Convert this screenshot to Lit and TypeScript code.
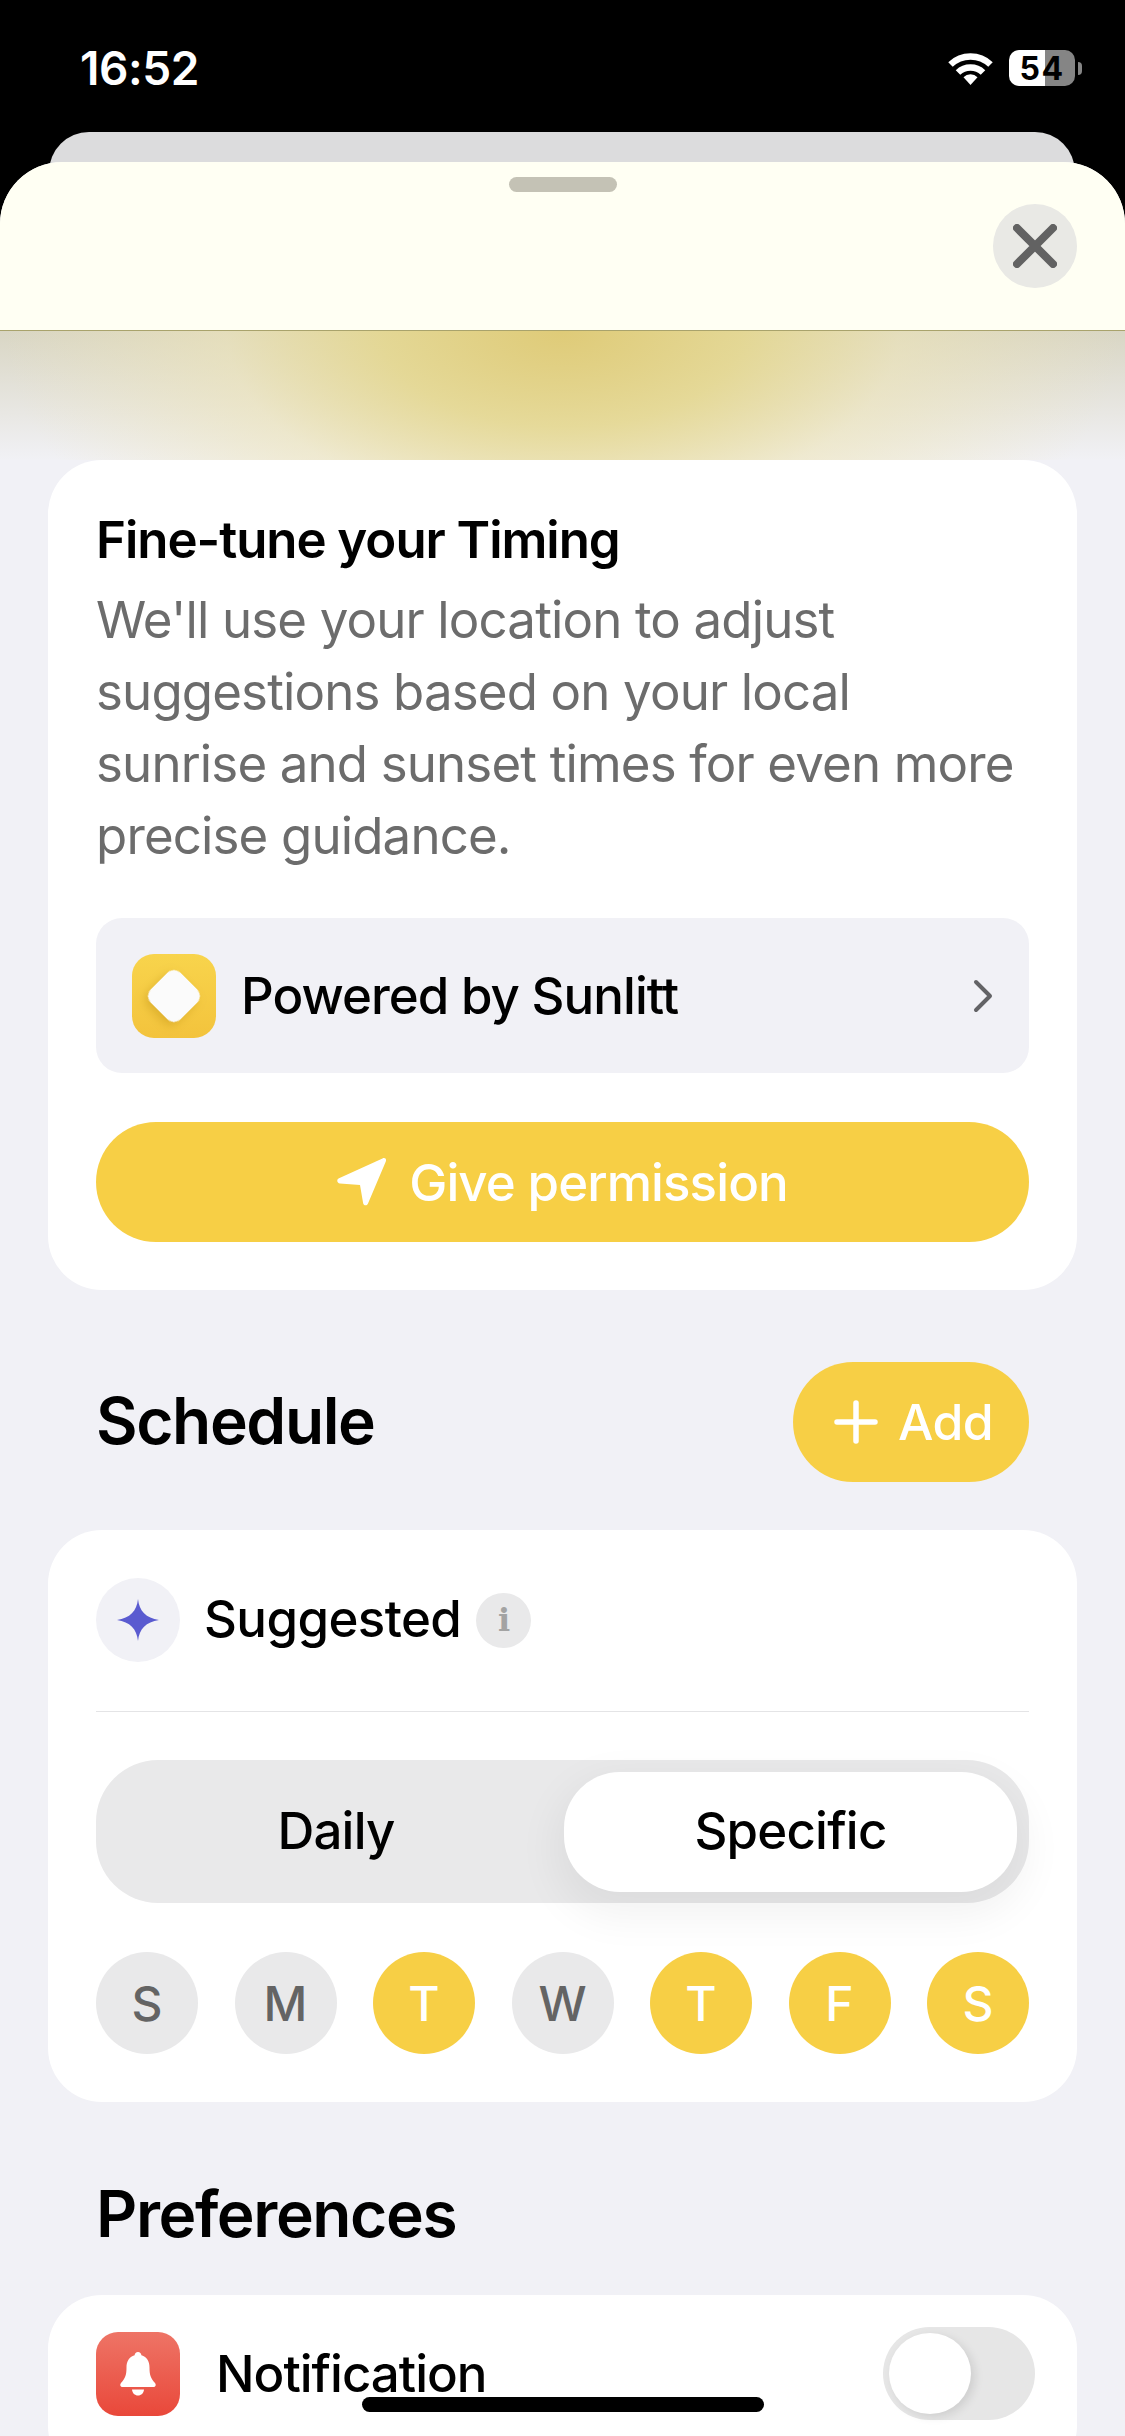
import { LitElement, html, css } from 'lit';
import { customElement } from 'lit/decorators.js';

const DAYS = [
  { label: 'S', on: false },
  { label: 'M', on: false },
  { label: 'T', on: true },
  { label: 'W', on: false },
  { label: 'T', on: true },
  { label: 'F', on: true },
  { label: 'S', on: true },
];

@customElement('app-root')
export class AppRoot extends LitElement {
  static styles = css`
    :host {
      display: block;
      position: relative;
      width: 1125px;
      height: 2436px;
      overflow: hidden;
      background: #000;
      font-family: Inter, 'Liberation Sans', sans-serif;
      color: #000;
    }

    /* status bar */
    .status {
      display: flex;
      align-items: center;
      justify-content: space-between;
      height: 132px;
      padding: 4px 43px 0 80px;
      box-sizing: border-box;
      color: #fff;
    }
    .time {
      font-size: 46px;
      font-weight: 600;
      letter-spacing: -0.4px;
    }
    .status-right {
      display: flex;
      align-items: center;
      gap: 16px;
    }
    .battery {
      display: flex;
      align-items: center;
      justify-content: center;
      width: 66px;
      height: 36px;
      border-radius: 10px;
      background: linear-gradient(90deg, #fff 0 54.5%, #858585 54.5% 100%);
      color: #000;
      font-size: 32px;
      font-weight: 700;
      letter-spacing: 1.5px;
    }
    .nub {
      width: 4px;
      height: 13px;
      margin-left: -13px;
      border-radius: 0 4px 4px 0;
      background: #858585;
    }

    /* sheets */
    .back-sheet {
      height: 60px;
      margin: 0 50px -30px 49px;
      border-radius: 40px 40px 0 0;
      background: #dcdcdd;
    }
    .sheet {
      position: relative;
      border-radius: 62px 62px 0 0;
      overflow: hidden;
      background: #f1f1f6;
    }
    .sheet-head {
      display: flex;
      flex-direction: column;
      box-sizing: border-box;
      height: 169px;
      padding-top: 15px;
      background: #fffff3;
      border-bottom: 1px solid #a9a36c;
    }
    .grabber {
      align-self: center;
      width: 108px;
      height: 15px;
      border-radius: 8px;
      background: #c4c2b5;
    }
    .close {
      display: flex;
      align-items: center;
      justify-content: center;
      align-self: flex-end;
      width: 84px;
      height: 84px;
      margin: 12px 48px 0 0;
      border-radius: 50%;
      background: #e9e9e5;
    }
    .glow {
      height: 129px;
      background:
        radial-gradient(ellipse 560px 300px at 50% 0, #dfcb78 0%, rgba(229, 215, 140, 0.85) 32%, rgba(238, 228, 180, 0.55) 60%, rgba(240, 232, 200, 0) 100%),
        linear-gradient(180deg, #d9d6c4 0%, #f1f1f5 100%);
    }
    .content {
      display: flex;
      flex-direction: column;
      padding: 0 48px;
    }
    .card {
      border-radius: 54px;
      background: #fff;
      padding: 48px;
    }

    /* permission card */
    .intro {
      padding-top: 50px;
    }
    .intro h2 {
      margin: 0 0 14px;
      font-size: 51px;
      line-height: 60px;
      font-weight: 600;
      letter-spacing: -1.05px;
    }
    .intro p {
      margin: 0;
      font-size: 51px;
      line-height: 72px;
      letter-spacing: -0.85px;
      color: #6c6c6c;
    }
    .powered {
      display: flex;
      align-items: center;
      gap: 25px;
      height: 155px;
      margin-top: 46px;
      padding: 0 36px;
      box-sizing: border-box;
      border-radius: 26px;
      background: #f1f1f6;
      font-size: 51px;
      font-weight: 450;
      letter-spacing: -0.95px;
    }
    .powered span {
      flex: 1;
    }
    .primary {
      display: flex;
      align-items: center;
      justify-content: center;
      gap: 22px;
      height: 120px;
      margin-top: 49px;
      border-radius: 60px;
      background: #f7cf45;
      color: #fff;
      font-size: 51px;
      font-weight: 500;
      letter-spacing: -0.9px;
    }

    /* section titles */
    .section-head {
      display: flex;
      align-items: center;
      justify-content: space-between;
      margin: 72px 0 48px;
      padding: 0 48px;
    }
    .section-head .section-title {
      padding-bottom: 3px;
    }
    .section-title {
      margin: 0;
      font-size: 64px;
      line-height: 78px;
      font-weight: 600;
      letter-spacing: -1.4px;
    }
    .add {
      display: flex;
      align-items: center;
      gap: 20px;
      height: 120px;
      padding: 0 36px 0 41px;
      border-radius: 60px;
      background: #f7cf45;
      color: #fff;
      font-size: 50px;
      font-weight: 500;
      letter-spacing: -0.6px;
    }
    .prefs-title {
      margin: 73px 0 42px;
      padding: 0 48px;
    }

    /* schedule card */
    .suggested {
      display: flex;
      align-items: center;
      gap: 24px;
      padding-bottom: 49px;
      border-bottom: 1px solid #e4e4e6;
      font-size: 51px;
      font-weight: 500;
      letter-spacing: -0.6px;
    }
    .suggested-label {
      padding-bottom: 3px;
    }
    .spark {
      display: flex;
      align-items: center;
      justify-content: center;
      width: 84px;
      height: 84px;
      border-radius: 50%;
      background: #f1f1f6;
    }
    .info {
      display: flex;
      align-items: center;
      justify-content: center;
      width: 55px;
      height: 55px;
      margin-left: -9px;
      border-radius: 50%;
      background: #e9e9ea;
      color: #a3a3a3;
      font-family: 'DejaVu Serif', serif;
      font-size: 32px;
      font-weight: 700;
    }
    .segment {
      display: grid;
      grid-template-columns: 456px 1fr;
      align-items: center;
      height: 143px;
      margin-top: 48px;
      padding: 12px;
      box-sizing: border-box;
      border-radius: 62px;
      background: #e9e9ea;
      font-size: 51px;
      font-weight: 500;
      letter-spacing: -0.8px;
      text-align: center;
    }
    .daily {
      padding-bottom: 3px;
    }
    .thumb {
      display: flex;
      align-items: center;
      justify-content: center;
      box-sizing: border-box;
      height: 120px;
      padding-bottom: 3px;
      border-radius: 56px;
      background: #fff;
      box-shadow: 0 16px 40px 10px rgba(0, 0, 0, 0.05);
    }
    .days {
      display: flex;
      justify-content: space-between;
      margin-top: 49px;
    }
    .day {
      display: flex;
      align-items: center;
      justify-content: center;
      width: 102px;
      height: 102px;
      border-radius: 50%;
      background: #e9e9ea;
      color: #646464;
      font-size: 48px;
      font-weight: 550;
    }
    .day.on {
      background: #f7cf45;
      color: #fff;
    }

    /* preferences card */
    .pref-row {
      display: flex;
      align-items: center;
      gap: 36px;
      padding-top: 32px;
      padding-bottom: 60px;
      font-size: 51px;
      font-weight: 450;
      letter-spacing: -1px;
    }
    .pref-row span {
      flex: 1;
    }
    .bell {
      display: flex;
      align-items: center;
      justify-content: center;
      width: 84px;
      height: 84px;
      border-radius: 22px;
      background: linear-gradient(180deg, #ee7466 0%, #e9483a 100%);
    }
    .toggle {
      display: flex;
      align-items: center;
      box-sizing: border-box;
      width: 152px;
      height: 93px;
      margin-right: -6px;
      padding-left: 6px;
      border-radius: 47px;
      background: #e6e6e6;
    }
    .knob {
      width: 82px;
      height: 81px;
      border-radius: 50%;
      background: #fff;
      box-shadow: 4px 3px 10px rgba(0, 0, 0, 0.1);
    }

    .home-bar {
      position: absolute;
      left: 362px;
      top: 2397px;
      width: 402px;
      height: 15px;
      border-radius: 8px;
      background: #000;
    }
  `;

  render() {
    return html`
      <div class="status">
        <div class="time">16:52</div>
        <div class="status-right">
          <svg width="45" height="33" viewBox="0 0 45 33" fill="none" stroke="#fff" stroke-width="6.5">
            <path d="M2.5 12.5a29 29 0 0 1 40 0" />
            <path d="M10 20.5a18 18 0 0 1 25 0" />
            <path d="M15.5 25.2a10 10 0 0 1 14 0L22.5 33z" fill="#fff" stroke="none" />
          </svg>
          <div class="battery">54</div>
          <div class="nub"></div>
        </div>
      </div>
      <div class="back-sheet"></div>
      <div class="sheet">
        <div class="sheet-head">
          <div class="grabber"></div>
          <div class="close">
            <svg width="44" height="44" viewBox="0 0 44 44" fill="none" stroke="#626262" stroke-width="8" stroke-linecap="round">
              <path d="M4 4l36 36M40 4L4 40" />
            </svg>
          </div>
        </div>
        <div class="glow"></div>
        <div class="content">
          <div class="card intro">
            <h2>Fine-tune your Timing</h2>
            <p>We'll use your location to adjust<br />suggestions based on your local<br />sunrise and sunset times for even more<br />precise guidance.</p>
            <div class="powered">
              <svg width="84" height="84" viewBox="0 0 84 84">
                <defs>
                  <linearGradient id="sun" x1="0" y1="0" x2="0" y2="1">
                    <stop offset="0" stop-color="#f8d44c" />
                    <stop offset="1" stop-color="#f3c33c" />
                  </linearGradient>
                  <filter id="lift" x="-40%" y="-40%" width="180%" height="180%">
                    <feDropShadow dx="0" dy="5" stdDeviation="5" flood-color="#a87b10" flood-opacity="0.3" />
                  </filter>
                </defs>
                <rect width="84" height="84" rx="22" fill="url(#sun)" />
                <rect x="21" y="21" width="42" height="42" rx="9" fill="#fbfbfb" filter="url(#lift)" transform="rotate(45 42 42)" />
              </svg>
              <span>Powered by Sunlitt</span>
              <svg width="20" height="34" viewBox="0 0 20 34" fill="none" stroke="#636366" stroke-width="4" stroke-linecap="round" stroke-linejoin="round">
                <path d="M3 3l14 14L3 31" />
              </svg>
            </div>
            <div class="primary">
              <svg width="50" height="50" viewBox="0 0 50 50" fill="#fff">
                <path d="M45.500 1.500c2.500-1.200 4.200.6 3.300 3L31 46.500c-1.100 2.800-4.500 2.300-4.900-.6L23 28 3 26.500c-3-.3-3.800-3.800-1-5.200z" />
              </svg>
              Give permission
            </div>
          </div>

          <div class="section-head">
            <h2 class="section-title">Schedule</h2>
            <div class="add">
              <svg width="44" height="44" viewBox="0 0 44 44" fill="none" stroke="#fff" stroke-width="5.500" stroke-linecap="round">
                <path d="M22 3v38M3 22h38" />
              </svg>
              Add
            </div>
          </div>

          <div class="card">
            <div class="suggested">
              <div class="spark">
                <svg width="42" height="42" viewBox="0 0 42 42" fill="#5a5bd0">
                  <path d="M21 0c1.200 12 8 19 21 21-13 2-19.800 9-21 21-1.200-12-8-19-21-21 13-2 19.800-9 21-21z" />
                </svg>
              </div>
              <div class="suggested-label">Suggested</div>
              <div class="info">i</div>
            </div>
            <div class="segment">
              <div class="daily">Daily</div>
              <div class="thumb">Specific</div>
            </div>
            <div class="days">
              ${DAYS.map((d) => html`<div class="day ${d.on ? 'on' : ''}">${d.label}</div>`)}
            </div>
          </div>

          <h2 class="section-title prefs-title">Preferences</h2>

          <div class="card pref-row">
            <div class="bell">
              <svg width="38" height="44" viewBox="0 0 38 44" fill="#fff">
                <path d="M19 0c2 0 3.200 1.300 3.400 3.200C28 5 30.500 9.500 30.500 15.500c0 7 1 10.500 5.500 15.500 1.500 1.800.6 4-1.800 4H3.800C1.400 35 .5 32.800 2 31c4.500-5 5.500-8.500 5.500-15.500C7.500 9.500 10 5 15.600 3.200 15.800 1.300 17 0 19 0z" />
                <path d="M13 37.500h12c-.3 3.700-2.800 6-6 6s-5.700-2.300-6-6z" />
              </svg>
            </div>
            <span>Notification</span>
            <div class="toggle"><div class="knob"></div></div>
          </div>
        </div>
      </div>
      <div class="home-bar"></div>
    `;
  }
}
